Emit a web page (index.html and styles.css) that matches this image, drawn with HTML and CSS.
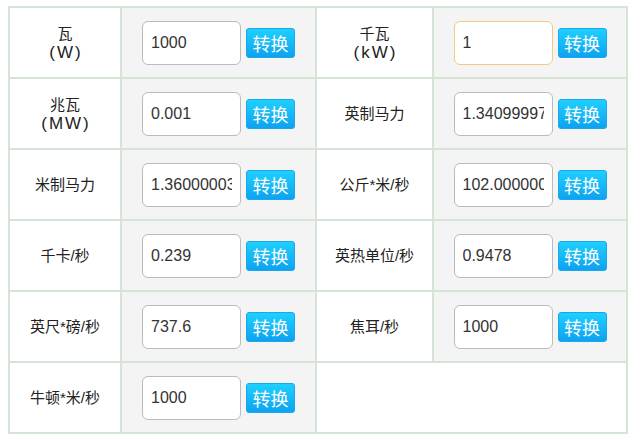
FILE: index.html
```html
<!DOCTYPE html>
<html>
<head>
<meta charset="utf-8">
<link rel="stylesheet" href="styles.css">
</head>
<body>
<table class="conv">
<colgroup><col class="c1"><col class="c2"><col class="c3"><col class="c4"></colgroup>
<tr>
<td class="lbl">瓦<br><span class="unit">(W)</span></td>
<td class="val"><input class="num" value="1000"><button class="btn">转换</button></td>
<td class="lbl">千瓦<br><span class="unit">(kW)</span></td>
<td class="val"><input class="num focus" value="1"><button class="btn">转换</button></td>
</tr>
<tr>
<td class="lbl">兆瓦<br><span class="unit">(MW)</span></td>
<td class="val"><input class="num" value="0.001"><button class="btn">转换</button></td>
<td class="lbl">英制马力</td>
<td class="val"><input class="num" value="1.34099997"><button class="btn">转换</button></td>
</tr>
<tr>
<td class="lbl">米制马力</td>
<td class="val"><input class="num" value="1.36000003"><button class="btn">转换</button></td>
<td class="lbl">公斤*米/秒</td>
<td class="val"><input class="num" value="102.0000000"><button class="btn">转换</button></td>
</tr>
<tr>
<td class="lbl">千卡/秒</td>
<td class="val"><input class="num" value="0.239"><button class="btn">转换</button></td>
<td class="lbl">英热单位/秒</td>
<td class="val"><input class="num" value="0.9478"><button class="btn">转换</button></td>
</tr>
<tr>
<td class="lbl">英尺*磅/秒</td>
<td class="val"><input class="num" value="737.6"><button class="btn">转换</button></td>
<td class="lbl">焦耳/秒</td>
<td class="val"><input class="num" value="1000"><button class="btn">转换</button></td>
</tr>
<tr>
<td class="lbl">牛顿*米/秒</td>
<td class="val"><input class="num" value="1000"><button class="btn">转换</button></td>
<td class="empty" colspan="2"></td>
</tr>
</table>
</body>
</html>
```
FILE: styles.css
```css
html, body {
  background: #fff;
}
body {
  margin: 6px 0 0 8px;
  font-family: "Liberation Sans", "Noto Sans CJK SC", sans-serif;
  color: #222;
}
.conv {
  border-collapse: collapse;
  table-layout: fixed;
  width: 618px;
}
.c1 { width: 112px; }
.c2 { width: 195px; }
.c3 { width: 117px; }
.c4 { width: 194px; }
.conv tr {
  height: 71px;
}
.conv td {
  border: 2px solid #d5e4d5;
  padding: 0;
  vertical-align: middle;
}
.lbl {
  background: #fff;
  text-align: center;
  font-size: 15px;
  line-height: 19px;
}
.unit {
  font-size: 17px;
  line-height: 19px;
  letter-spacing: 2px;
  padding-left: 2px;
}
.val {
  background: #f4f4f4;
  text-align: center;
  white-space: nowrap;
}
.empty {
  background: #fff;
}
.num {
  box-sizing: border-box;
  width: 99px;
  height: 44px;
  border: 1px solid #bbb;
  border-radius: 6px;
  background: #fff;
  padding: 0 8px;
  font-family: "Liberation Sans", Arial, sans-serif;
  font-size: 16px;
  color: #333;
  vertical-align: middle;
  margin: 0 5px 0 0;
  outline: none;
}
.num.focus {
  border-color: #f3c983;
}
.btn {
  box-sizing: border-box;
  width: 49px;
  height: 30px;
  border: 1px solid #19a8ee;
  border-radius: 3px;
  background: linear-gradient(#1fd0fe, #0ea2f0);
  color: #fff;
  font-family: "Noto Sans CJK SC", sans-serif;
  font-size: 18px;
  line-height: 26px;
  padding: 0;
  vertical-align: middle;
  margin: 0;
}
```
